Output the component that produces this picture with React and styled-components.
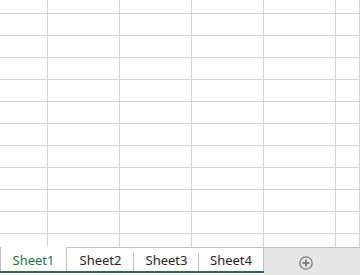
import React from "react";
import styled, { createGlobalStyle } from "styled-components";

const GlobalStyle = createGlobalStyle`
  html, body {
    margin: 0;
    padding: 0;
    background: #ffffff;
    overflow: hidden;
  }
`;

const Page = styled.div`
  width: 360px;
  height: 275px;
  display: flex;
  flex-direction: column;
  font-family: "Segoe UI", "Noto Sans", "Liberation Sans", sans-serif;
`;

const Grid = styled.div`
  height: 247px;
  display: grid;
  grid-template-columns: 48px repeat(4, 72px) 1fr;
  grid-template-rows: 14px repeat(10, 22px) 1fr;
  overflow: hidden;
`;

const Cell = styled.div`
  box-sizing: border-box;
  border-right: 1px solid #d4d4d4;
  border-bottom: ${(p) => (p.last ? "none" : "1px solid #d4d4d4")};
`;

const TabBar = styled.div`
  flex: 1;
  display: flex;
  background: #ffffff;
`;

const TabStrip = styled.div`
  display: flex;
  height: 24px;
  border-bottom: 2px solid #217346;
`;

const Tab = styled.div`
  position: relative;
  box-sizing: border-box;
  width: ${(p) => p.w}px;
  height: 24px;
  display: flex;
  align-items: center;
  justify-content: center;
  font-size: 13px;
  color: ${(p) => (p.active ? "#217346" : "#262626")};
  background: #ffffff;
  border-top: ${(p) => (p.active ? "none" : "1px solid #c0c0c0")};
  border-left: ${(p) => (p.first ? "1px solid #c0c0c0" : "none")};
  border-right: ${(p) => (p.edge ? "1px solid #c0c0c0" : "none")};
  padding-top: ${(p) => (p.active ? "1px" : "0")};

  &::after {
    content: "";
    display: ${(p) => (p.edge ? "none" : "block")};
    position: absolute;
    right: 0;
    top: 5px;
    bottom: 0;
    width: 1px;
    background: #c0c0c0;
  }
`;

const AddArea = styled.div`
  flex: 1;
  display: flex;
  justify-content: center;
  align-items: flex-start;
  padding-top: 8px;
  padding-right: 12px;
  background: #e6e6e6;
  border-top: 1px solid #c0c0c0;
`;

const AddIcon = () => (
  <svg width="14" height="14" viewBox="0 0 14 14">
    <circle cx="7" cy="7" r="6.2" fill="none" stroke="#7a7a7a" strokeWidth="1.3" />
    <path d="M7 3.6v6.8M3.6 7h6.8" stroke="#7a7a7a" strokeWidth="1.8" />
  </svg>
);

const sheets = [
  { name: "Sheet1", w: 67, active: true, first: true, edge: true },
  { name: "Sheet2", w: 67 },
  { name: "Sheet3", w: 65 },
  { name: "Sheet4", w: 65, edge: true },
];

const App = () => {
  const cells = [];
  for (let r = 0; r < 12; r++) {
    for (let c = 0; c < 6; c++) {
      cells.push(<Cell key={`c_${r}_${c}`} last={r === 11} />);
    }
  }

  return (
    <Page>
      <GlobalStyle />
      <Grid>{cells}</Grid>
      <TabBar>
        <TabStrip>
          {sheets.map((s) => (
            <Tab key={s.name} w={s.w} active={s.active} first={s.first} edge={s.edge}>
              {s.name}
            </Tab>
          ))}
        </TabStrip>
        <AddArea>
          <AddIcon />
        </AddArea>
      </TabBar>
    </Page>
  );
};

export default App;
